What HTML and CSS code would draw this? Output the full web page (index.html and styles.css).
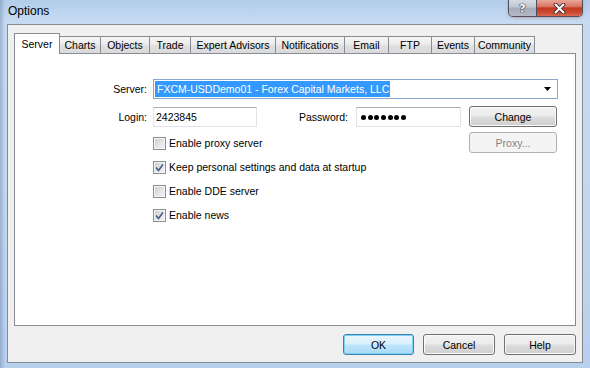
FILE: index.html
```html
<!DOCTYPE html>
<html>
<head>
<meta charset="utf-8">
<link rel="stylesheet" href="styles.css">
</head>
<body>
<div class="titlebar">
  <div class="title">Options</div>
  <div class="caption">
    <div class="cap cap-help">?</div>
    <div class="cap cap-close">
      <svg width="13" height="11" viewBox="0 0 13 11">
        <path d="M2.5 1.5 L10.5 9.5 M10.5 1.5 L2.5 9.5" stroke="#3b2a2a" stroke-width="3.8" stroke-linecap="round"/>
        <path d="M2.5 1.5 L10.5 9.5 M10.5 1.5 L2.5 9.5" stroke="#ffffff" stroke-width="2" stroke-linecap="round"/>
      </svg>
    </div>
  </div>
</div>
<div class="client">
  <div class="tabs">
    <div class="tab active w-server">Server</div>
    <div class="tab w-charts">Charts</div>
    <div class="tab w-objects">Objects</div>
    <div class="tab w-trade">Trade</div>
    <div class="tab w-ea">Expert Advisors</div>
    <div class="tab w-notif">Notifications</div>
    <div class="tab w-email">Email</div>
    <div class="tab w-ftp">FTP</div>
    <div class="tab w-events">Events</div>
    <div class="tab w-comm">Community</div>
  </div>
  <div class="panel">
    <div class="row row-server">
      <div class="lbl">Server:</div>
      <div class="combo">
        <span class="sel">FXCM-USDDemo01 - Forex Capital Markets, LLC</span>
        <svg class="arrow" width="7" height="4" viewBox="0 0 7 4"><polygon points="0,0 7,0 3.5,4" fill="#000"/></svg>
      </div>
    </div>
    <div class="row row-login">
      <div class="lbl">Login:</div>
      <div class="input login">2423845</div>
      <div class="lbl pwlbl">Password:</div>
      <div class="input password" aria-label="password"><span class="dot"></span><span class="dot"></span><span class="dot"></span><span class="dot"></span><span class="dot"></span><span class="dot"></span><span class="dot"></span></div>
      <div class="btn change">Change</div>
    </div>
    <div class="options">
      <div class="checks">
        <div class="check"><span class="box"></span><span>Enable proxy server</span></div>
        <div class="check"><span class="box"><svg width="11" height="11" viewBox="0 0 11 11"><polyline points="2,5.5 4.5,8.5 9,2.5" fill="none" stroke="#4b5f8c" stroke-width="1.7"/></svg></span><span>Keep personal settings and data at startup</span></div>
        <div class="check"><span class="box"></span><span>Enable DDE server</span></div>
        <div class="check"><span class="box"><svg width="11" height="11" viewBox="0 0 11 11"><polyline points="2,5.5 4.5,8.5 9,2.5" fill="none" stroke="#4b5f8c" stroke-width="1.7"/></svg></span><span>Enable news</span></div>
      </div>
      <div class="btn disabled proxy">Proxy...</div>
    </div>
  </div>
  <div class="actions">
    <div class="btn default ok">OK</div>
    <div class="btn">Cancel</div>
    <div class="btn">Help</div>
  </div>
</div>
</body>
</html>
```
FILE: styles.css
```css
* { box-sizing: border-box; }
html, body { margin: 0; padding: 0; }
body {
  width: 590px;
  height: 368px;
  overflow: hidden;
  font-family: "Liberation Sans", Arial, sans-serif;
  font-size: 10.5px;
  color: #000;
  background:
    linear-gradient(90deg, rgba(40,60,120,0.25) 0, rgba(40,60,120,0) 5px),
    linear-gradient(180deg, #b2cdea 0, #c6dbf1 22px, #c0d7ef 60%, #b7d0ec 100%);
}

/* title bar */
.titlebar {
  height: 24px;
  display: flex;
  align-items: flex-start;
  padding: 0 7px 0 8px;
}
.title {
  font-size: 12px;
  line-height: 22px;
  color: #000;
}
.caption {
  margin-left: auto;
  display: flex;
  height: 17px;
  border: 1px solid #4b4f5e;
  border-top: 0;
  border-radius: 0 0 5px 5px;
  overflow: hidden;
  box-shadow: 0 1px 3px rgba(180,60,60,0.35);
}
.cap {
  display: flex;
  align-items: center;
  justify-content: center;
}
.cap-help {
  width: 28px;
  border-right: 1px solid #4b4f5e;
  background: linear-gradient(180deg, #d6dbe4 0, #bfc5d1 45%, #a5abba 50%, #b3b9c7 100%);
  color: #fff;
  font-weight: bold;
  font-size: 11px;
  font-family: "DejaVu Sans", sans-serif;
  text-shadow: 0 0 1px #222, 0 0 1px #222, 0 0 1px #222;
}
.cap-close {
  width: 45px;
  background: linear-gradient(180deg, #eaa697 0, #d97663 40%, #c3391f 50%, #cc4c31 80%, #d86a4f 100%);
}

/* client area */
.client {
  margin: 0 7px;
  height: 339px;
  background: #f0f0f0;
  border: 1px solid #868a93;
  padding: 8px 6px 0;
  display: flex;
  flex-direction: column;
}

/* tabs */
.tabs {
  display: flex;
  align-items: flex-end;
  height: 21px;
  margin-bottom: -1px;
  position: relative;
  z-index: 1;
}
.tab {
  height: 18px;
  border: 1px solid #898c95;
  border-left-width: 0;
  background: linear-gradient(180deg, #f6f6f6 0, #ececec 45%, #e0e0e0 55%, #dadada 100%);
  display: flex;
  align-items: center;
  justify-content: center;
  white-space: nowrap;
}
.tab.active {
  height: 21px;
  border-left-width: 1px;
  border-bottom: 0;
  background: #fff;
  padding-bottom: 1px;
}
.w-server { width: 46px; }
.w-charts { width: 41px; }
.w-objects { width: 49px; }
.w-trade { width: 41px; }
.w-ea { width: 85px; }
.w-notif { width: 69px; }
.w-email { width: 44px; }
.w-ftp { width: 43px; }
.w-events { width: 43px; }
.w-comm { width: 60px; }

/* panel */
.panel {
  height: 273px;
  background: #fff;
  border: 1px solid #898c95;
  padding-top: 25px;
}
.row {
  display: flex;
  align-items: flex-end;
}
.lbl {
  width: 138px;
  padding-right: 6px;
  text-align: right;
  line-height: 20px;
  white-space: nowrap;
}
.combo {
  width: 405px;
  height: 20px;
  border: 1px solid #8ba7c9;
  display: flex;
  align-items: center;
  padding: 0 1px;
  background: #fff;
}
.sel {
  background: #3399ff;
  color: #fff;
  line-height: 16px;
  padding: 0 1px 0 2px;
  white-space: nowrap;
}
.arrow { margin-left: auto; margin-right: 5px; }

.row-login { margin-top: 7px; }
.input {
  height: 20px;
  border: 1px solid #e2e3ea;
  border-top-color: #abadb3;
  background: #fff;
  display: flex;
  align-items: center;
  padding-left: 2px;
  flex: none;
}
.login { width: 104px; }
.lbl.pwlbl { width: 99px; padding-right: 8px; }
.password { width: 105px; padding-left: 4px; gap: 1.7px; }
.dot {
  width: 5px;
  height: 5px;
  border-radius: 50%;
  background: #000;
}

.options {
  margin-top: 4px;
  margin-left: 138px;
  width: 404px;
  display: flex;
  justify-content: space-between;
  align-items: flex-start;
}
.checks { display: flex; flex-direction: column; }
.check {
  height: 24px;
  display: flex;
  align-items: center;
  gap: 3px;
  white-space: nowrap;
}
.box {
  width: 13px;
  height: 13px;
  border: 1px solid #8e8f8f;
  background: linear-gradient(135deg, #c9cbcf 0, #e6e7e8 60%, #f4f4f4 100%);
  box-shadow: inset 0 0 0 1px #f4f4f4;
  display: flex;
  align-items: center;
  justify-content: center;
}

/* buttons */
.btn {
  height: 21px;
  width: 72px;
  flex: none;
  border: 1px solid #707070;
  border-radius: 3px;
  background: linear-gradient(180deg, #f2f2f2 0, #ebebeb 48%, #dddddd 52%, #cfcfcf 100%);
  box-shadow: inset 0 0 0 1px #fbfbfb;
  display: flex;
  align-items: center;
  justify-content: center;
  white-space: nowrap;
}
.btn.default {
  border-color: #3c7fb1;
  background: linear-gradient(180deg, #eaf6fd 0, #d9f0fc 48%, #bee6fd 52%, #a7d9f5 100%);
  box-shadow: inset 0 0 0 1px #7fd0f5;
}
.btn.disabled {
  border-color: #adb2b5;
  background: #f4f4f4;
  box-shadow: none;
  color: #838383;
}
.btn.ok { width: 71px; }
.btn.change { width: 88px; margin-left: 8px; }
.btn.proxy { width: 88px; margin-top: 1px; }

.actions {
  display: flex;
  justify-content: flex-end;
  gap: 9px;
  margin-top: 8px;
}
```
